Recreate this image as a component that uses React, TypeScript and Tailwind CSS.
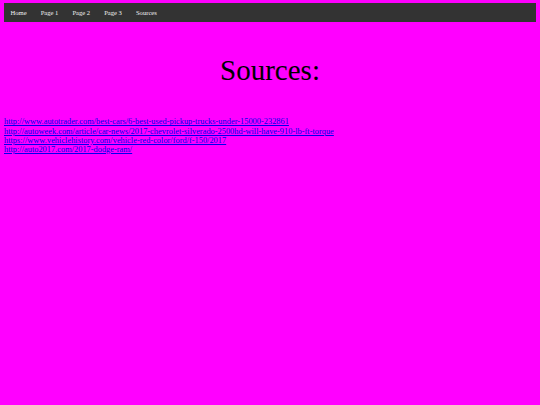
const navItems = ['Home', 'Page 1', 'Page 2', 'Page 3', 'Sources'];

const sources = [
  'http://www.autotrader.com/best-cars/6-best-used-pickup-trucks-under-15000-232861',
  'http://autoweek.com/article/car-news/2017-chevrolet-silverado-2500hd-will-have-910-lb-ft-torque',
  'https://www.vehiclehistory.com/vehicle-red-color/ford/f-150/2017',
  'http://auto2017.com/2017-dodge-ram/',
];

export default function App() {
  return (
    <div className="min-h-[405px] bg-[#ff00ff] p-[4px] pt-[3px] font-['Liberation_Serif',serif]">
      {/* Nav bar */}
      <ul className="flex h-[19px] items-center bg-[#333333] ml-[-0.5px]">
        {navItems.map((item) => (
          <li key={item}>
            <a href="#" className="block px-[7px] text-[6.6px] leading-[19px] text-[#f2f2f2] no-underline">
              {item}
            </a>
          </li>
        ))}
      </ul>

      <h1 className="mt-[32px] text-center text-[29px] leading-[1.15] font-normal text-black">Sources:</h1>

      <div className="mt-[30px] flex flex-col items-start">
        {sources.map((url) => (
          <a key={url} href={url} className="text-[8.4px] leading-[9.2px] text-[#0000ee] underline">
            {url}
          </a>
        ))}
      </div>
    </div>
  );
}
